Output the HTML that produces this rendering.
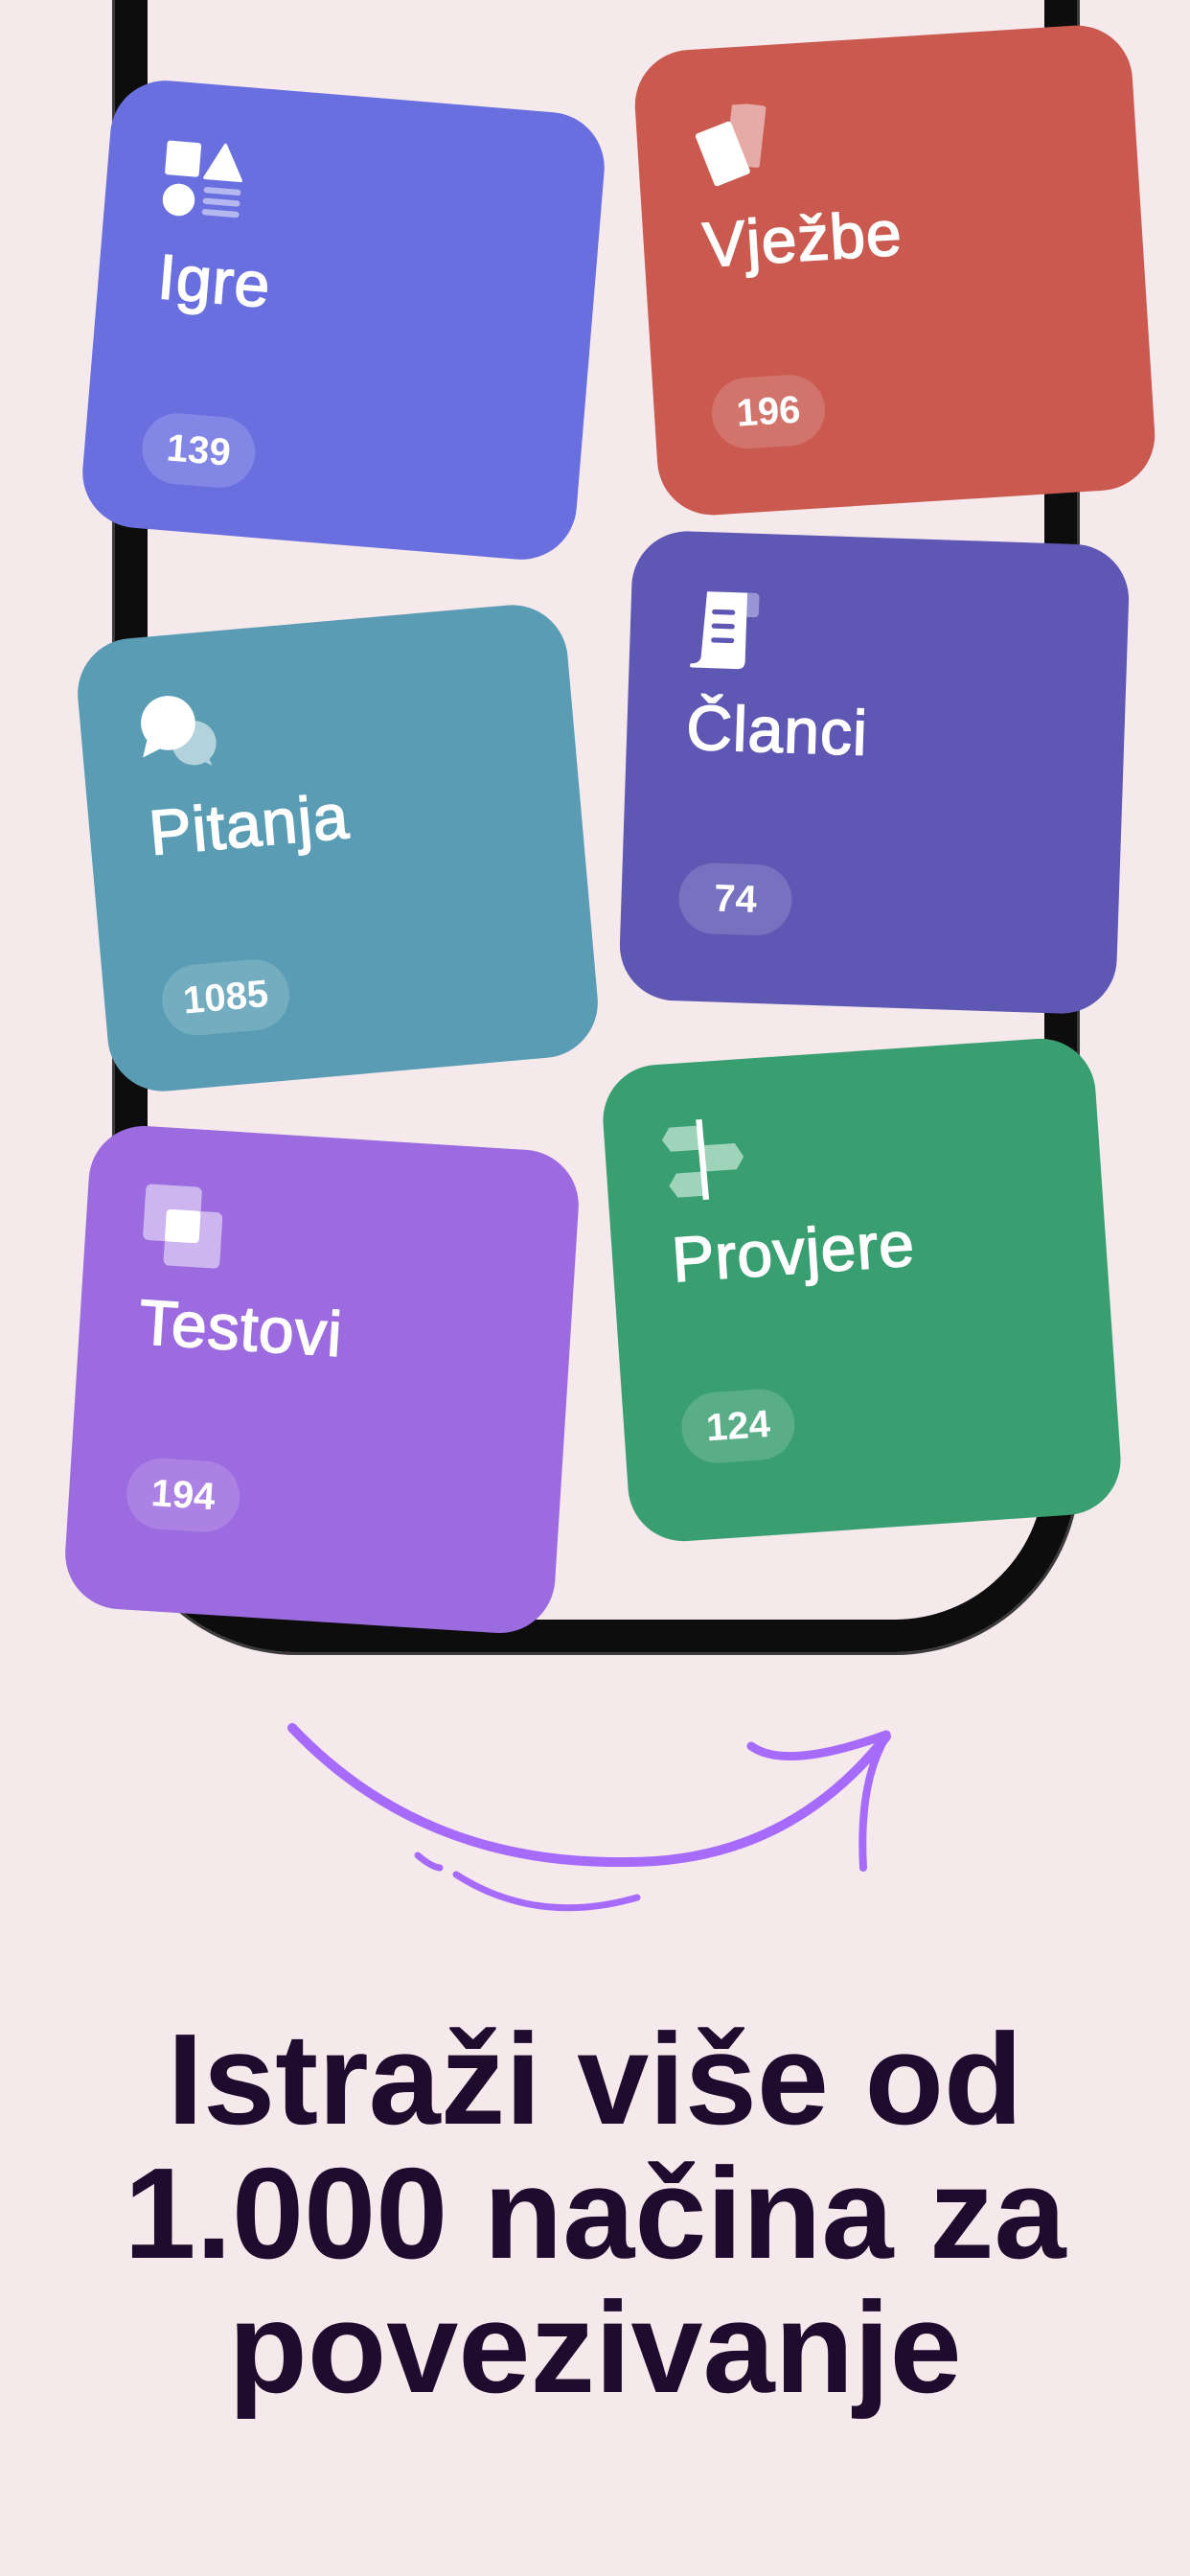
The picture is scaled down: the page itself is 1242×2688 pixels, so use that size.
<!DOCTYPE html>
<html><head><meta charset="utf-8">
<style>
html,body{margin:0;padding:0}
body{width:1242px;height:2688px;background:#F5E9EC;position:relative;overflow:hidden;font-family:"Liberation Sans",sans-serif}
.phone{position:absolute;left:120px;top:-500px;width:936px;height:2156px;border:34px solid #0d0d0d;border-radius:190px;box-shadow:0 0 0 3px #3a3a3a}
.card{position:absolute;border-radius:58px;color:#fff}
.card svg.ic{position:absolute;left:60px;top:60px;width:84px;height:84px}
.card .t{position:absolute;left:62px;top:170px;font-size:66px;line-height:68px;font-weight:400;letter-spacing:1px;-webkit-text-stroke:1.6px #fff}
.card .b{position:absolute;left:60px;top:345px;height:74px;min-width:118px;padding:0 22px;box-sizing:border-box;border-radius:37px;background:rgba(255,255,255,.16);font-size:40px;line-height:74px;text-align:center;font-weight:700}
.head{position:absolute;left:0;top:2100px;width:1242px;text-align:center;font-size:135px;line-height:140px;font-weight:700;color:#1E0B2E}
</style></head><body>
<div class="phone"></div>

<div class="card" style="left:100px;top:100px;width:517px;height:468px;background:#6A6FE0;transform:rotate(4.7deg)">
<svg class="ic" viewBox="0 0 80 80"><rect x="0" y="2" width="34" height="34" rx="3" fill="#fff"/><path d="M58 2 L76 36 L40 36 Z" fill="#fff" stroke="#fff" stroke-width="3" stroke-linejoin="round"/><circle cx="16" cy="60" r="16" fill="#fff"/><g stroke="#fff" stroke-opacity=".5" stroke-width="6" stroke-linecap="round"><line x1="43" y1="48" x2="74" y2="48"/><line x1="43" y1="59" x2="74" y2="59"/><line x1="43" y1="70" x2="74" y2="70"/></g></svg>
<div class="t">Igre</div><div class="b">139</div></div>

<div class="card" style="left:674px;top:39px;width:520px;height:486px;background:#CA5A50;transform:rotate(-3.6deg)">
<svg class="ic" viewBox="0 0 80 80"><rect x="34" y="0" width="34" height="62" rx="3" fill="#E6ABA6" transform="rotate(10 51 31)"/><rect x="8" y="20" width="38" height="56" rx="3" fill="#fff" transform="rotate(-18 27 48)"/></svg>
<div class="t">Vježbe</div><div class="b">196</div></div>

<div class="card" style="left:96px;top:648px;width:513px;height:474px;background:#5A9CB4;transform:rotate(-5deg)">
<svg class="ic" viewBox="0 0 80 80"><circle cx="54" cy="52" r="22" fill="#B3D3DC"/><path d="M60 70 L70 76 L66 64Z" fill="#B3D3DC"/><circle cx="30" cy="30" r="27" fill="#fff"/><path d="M8 44 L2 62 L22 54Z" fill="#fff"/></svg>
<div class="t">Pitanja</div><div class="b">1085</div></div>

<div class="card" style="left:653px;top:561px;width:519px;height:490px;background:#5E57B3;transform:rotate(1.9deg)">
<svg class="ic" viewBox="0 0 80 80"><rect x="46" y="2" width="24" height="24" rx="4" fill="#9A95D6"/><path d="M18 2 H58 V70 Q58 78 50 78 H6 Q2 78 4 74 Q12 74 14 68 Z" fill="#fff"/><g stroke="#5E57B3" stroke-width="5" stroke-linecap="round"><line x1="26" y1="22" x2="44" y2="22"/><line x1="26" y1="36" x2="44" y2="36"/><line x1="26" y1="50" x2="44" y2="50"/></g></svg>
<div class="t">Članci</div><div class="b">74</div></div>

<div class="card" style="left:80px;top:1187px;width:512px;height:505px;background:#9B6BDF;transform:rotate(3.6deg)">
<svg class="ic" viewBox="0 0 80 80"><rect x="0" y="0" width="56" height="56" rx="6" fill="#fff" fill-opacity=".5"/><rect x="22" y="24" width="56" height="56" rx="6" fill="#fff" fill-opacity=".5"/><rect x="22" y="24" width="34" height="32" rx="4" fill="#fff"/></svg>
<div class="t">Testovi</div><div class="b">194</div></div>

<div class="card" style="left:642px;top:1097px;width:515px;height:498px;background:#3A9F70;transform:rotate(-3.9deg)">
<svg class="ic" viewBox="0 0 80 80"><path d="M8 6 H38 V30 H8 L0 18Z" fill="#A0D4BA"/><path d="M40 26 H72 L80 40 L72 52 H40Z" fill="#A0D4BA"/><path d="M12 52 H38 V76 H12 L4 64Z" fill="#A0D4BA"/><line x1="38" y1="0" x2="40" y2="92" stroke="#fff" stroke-width="6" stroke-linecap="round"/></svg>
<div class="t">Provjere</div><div class="b">124</div></div>

<svg style="position:absolute;left:0;top:0" width="1242" height="2688" viewBox="0 0 1242 2688">
<g fill="none" stroke="#A66BFA" stroke-linecap="round">
<path d="M305 1803 Q440 1945 650 1943 Q820 1945 925 1812" stroke-width="10"/>
<path d="M784 1822 Q820 1848 925 1810" stroke-width="9"/>
<path d="M925 1812 Q896 1860 901 1949" stroke-width="8"/>
<path d="M436 1936 Q450 1948 459 1949" stroke-width="7"/>
<path d="M476 1956 Q560 2010 665 1980" stroke-width="7"/>
</g></svg>

<div class="head">Istraži više od<br>1.000 načina za<br>povezivanje</div>
</body></html>
